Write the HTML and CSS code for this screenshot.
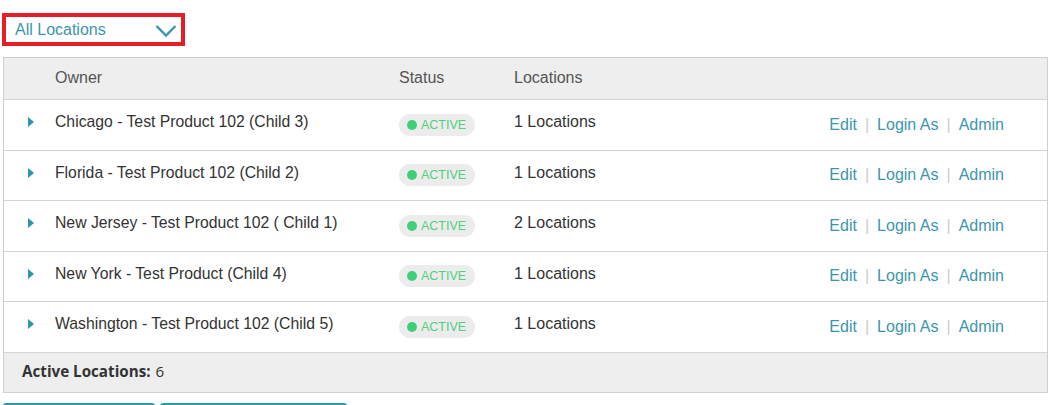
FILE: index.html
```html
<!DOCTYPE html>
<html>
<head>
<meta charset="utf-8">
<link rel="stylesheet" href="styles.css">
</head>
<body>
<div class="page">
  <div class="dropdown">
    <span class="dd-label">All Locations</span>
    <svg class="chev" width="22" height="14" viewBox="0 0 22 14"><polyline points="1.5,2 11,11.5 20.5,2" fill="none" stroke="#3b96ab" stroke-width="2.4"/></svg>
  </div>
  <div class="table">
    <div class="row head">
      <div></div>
      <div class="c-owner">Owner</div>
      <div>Status</div>
      <div>Locations</div>
      <div></div>
    </div>
    <div class="row">
      <div class="tri"></div>
      <div class="c-owner">Chicago - Test Product 102 (Child 3)</div>
      <div><span class="badge"><i class="dot"></i>ACTIVE</span></div>
      <div class="c-loc">1 Locations</div>
      <div class="actions"><a>Edit</a><span class="sep">|</span><a>Login As</a><span class="sep">|</span><a>Admin</a></div>
    </div>
    <div class="row">
      <div class="tri"></div>
      <div class="c-owner">Florida - Test Product 102 (Child 2)</div>
      <div><span class="badge"><i class="dot"></i>ACTIVE</span></div>
      <div class="c-loc">1 Locations</div>
      <div class="actions"><a>Edit</a><span class="sep">|</span><a>Login As</a><span class="sep">|</span><a>Admin</a></div>
    </div>
    <div class="row">
      <div class="tri"></div>
      <div class="c-owner">New Jersey - Test Product 102 ( Child 1)</div>
      <div><span class="badge"><i class="dot"></i>ACTIVE</span></div>
      <div class="c-loc">2 Locations</div>
      <div class="actions"><a>Edit</a><span class="sep">|</span><a>Login As</a><span class="sep">|</span><a>Admin</a></div>
    </div>
    <div class="row">
      <div class="tri"></div>
      <div class="c-owner">New York - Test Product (Child 4)</div>
      <div><span class="badge"><i class="dot"></i>ACTIVE</span></div>
      <div class="c-loc">1 Locations</div>
      <div class="actions"><a>Edit</a><span class="sep">|</span><a>Login As</a><span class="sep">|</span><a>Admin</a></div>
    </div>
    <div class="row">
      <div class="tri"></div>
      <div class="c-owner">Washington - Test Product 102 (Child 5)</div>
      <div><span class="badge"><i class="dot"></i>ACTIVE</span></div>
      <div class="c-loc">1 Locations</div>
      <div class="actions"><a>Edit</a><span class="sep">|</span><a>Login As</a><span class="sep">|</span><a>Admin</a></div>
    </div>
    <div class="foot"><b>Active Locations:</b> 6</div>
  </div>
  <div class="buttons">
    <div class="btn b1"></div>
    <div class="btn b2"></div>
  </div>
</div>
</body>
</html>
```
FILE: styles.css
```css
html, body { margin: 0; padding: 0; background: #fff; overflow: hidden; }
body { font-family: "Liberation Sans", Arial, sans-serif; font-size: 16px; color: #333; height: 405px; }
.page { padding: 13px 0 0 3px; width: 1045px; }
.dropdown {
  margin-left: -1px;
  height: 25px;
  border: 4px solid #e61e27;
  display: flex; align-items: center; justify-content: space-between;
  padding: 0 4px 0 9px;
  box-sizing: content-box;
  width: 162px;
}
.dd-label { color: #3b96ab; font-size: 16px; }
.chev { margin-top: 2px; }
.table { margin-top: 11px; border: 1px solid #cfcfcf; }
.row {
  display: grid;
  grid-template-columns: 51px 344px 115px 1fr auto;
  align-items: center;
  height: 49.5px;
  border-top: 1px solid #d4d4d4;
  padding-right: 43px;
}
.row.head { border-top: none; height: 41px; background: #eeeeee; color: #555; font-size: 16px; }
.row.head > div { padding-bottom: 1px; }
.c-owner, .c-loc { padding-bottom: 5px; }
.row .c-owner { font-size: 15.75px; }
.row.head .c-owner { font-size: 16px; }
.tri {
  width: 0; height: 0; margin-left: 24px; margin-bottom: 5px;
  border-left: 6.5px solid #2a98ac;
  border-top: 5px solid transparent;
  border-bottom: 5px solid transparent;
}
.badge {
  display: inline-flex; align-items: center;
  height: 22px; padding: 0 9px 0 8px;
  background: #ececec; border-radius: 11px;
  color: #4fcf80; font-size: 12.5px;
}
.dot { width: 10px; height: 10px; border-radius: 50%; background: #3fcf78; margin-right: 4px; }
.actions { color: #3b96ab; }
.actions a { color: #3b96ab; }
.sep { color: #cccccc; margin: 0 8px; }
.foot {
  border-top: 1px solid #d4d4d4;
  background: #eeeeee;
  display: flex; align-items: center;
  padding-left: 18px; padding-bottom: 2px; box-sizing: border-box; height: 40px;
  font-family: "Open Sans", sans-serif; font-size: 15.2px; color: #333;
}
.foot b { font-weight: 700; margin-right: 5px; }
.foot { word-spacing: 0; }
.buttons { display: flex; gap: 5px; margin-top: 10px; }
.btn { height: 36px; border: 2px solid #2d97ac; border-radius: 3px; background: #fff; }
.b1 { width: 148px; }
.b2 { width: 183px; }
```
